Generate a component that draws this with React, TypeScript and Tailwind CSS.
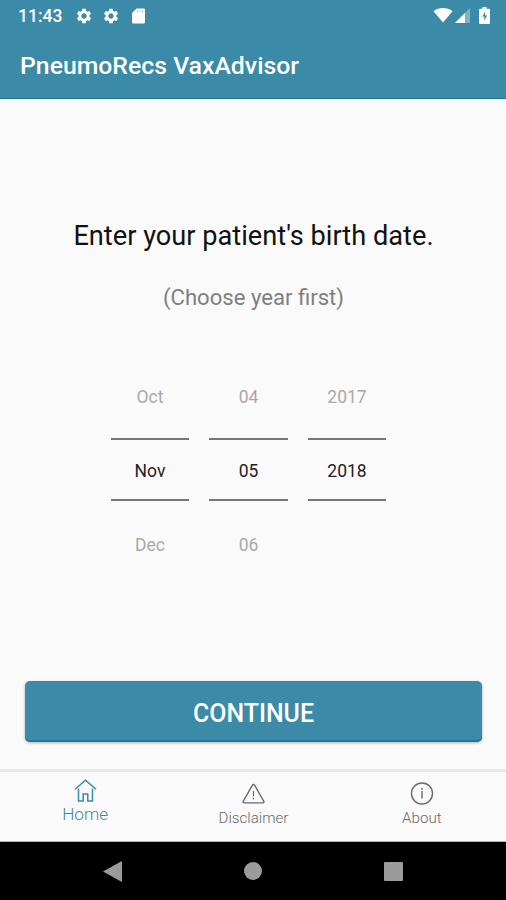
import React, { useState } from 'react';
import { MdSettings } from 'react-icons/md';

const StatusBar = () => (
  <div className="h-8 pl-[18px] pr-[16px] flex items-center justify-between">
    <div className="flex items-center">
      <span className="w-[57px] text-[17.5px] leading-8 font-medium">11:43</span>
      <MdSettings className="w-[18px] h-[18px] -mt-px" />
      <MdSettings className="w-[18px] h-[18px] -mt-px ml-[9px]" />
      <svg className="w-[13px] h-[16px] ml-[12px] -mt-px" viewBox="0 0 13 16">
        <path
          d="M4.5 0.5H11.8A1.2 1.2 0 0 1 13 1.7V14.3A1.2 1.2 0 0 1 11.8 15.5H1.2A1.2 1.2 0 0 1 0 14.3V5Z"
          fill="currentColor"
        />
        <path d="M5.5 2v2.5M8 2v2.5M10.5 2v2.5" stroke="#3a8aa8" strokeOpacity="0.4" />
      </svg>
    </div>
    <div className="flex items-center -mt-[2px]">
      <svg className="w-[20px] h-[16px]" viewBox="0 0 20 16" fill="currentColor">
        <path d="M0.5 4.2C6 -0.2 14 -0.2 19.5 4.2L10 15.5Z" />
      </svg>
      <svg className="w-[15px] h-[15px] ml-[2px]" viewBox="0 0 15 15" fill="currentColor">
        <path d="M0 15L15 0V15Z" opacity="0.35" />
        <path d="M0 15L10 5V15Z" />
      </svg>
      <svg className="w-[11px] h-[17px] ml-[9px]" viewBox="0 0 11 17">
        <path
          d="M3.5 0h4v1.8h2.3a1.2 1.2 0 0 1 1.2 1.2v12.8a1.2 1.2 0 0 1-1.2 1.2H1.2A1.2 1.2 0 0 1 0 15.8V3a1.2 1.2 0 0 1 1.2-1.2h2.3z"
          fill="currentColor"
        />
        <path d="M6.2 4.5L3.3 9.6h2v4L8.2 8.5h-2z" fill="#3a8aa8" />
      </svg>
    </div>
  </div>
);

const columns = [
  { id: 'month', values: ['Oct', 'Nov', 'Dec'] },
  { id: 'day', values: ['04', '05', '06'] },
  { id: 'year', values: ['2017', '2018', ''] },
];

const DatePicker = () => (
  <div className="flex justify-center gap-5 mr-[9px] text-[17.5px] text-[#a9a9a9]">
    {columns.map(({ id, values }) => (
      <div key={id} className="w-[78.5px] text-center">
        <div className="h-[63px] leading-[44px]">{values[0]}</div>
        <div className="h-[63px] leading-[62px] border-y-2 border-[#777777] text-[#222222]">
          {values[1]}
        </div>
        <div className="h-[66px] pt-[23px] leading-[42px]">{values[2]}</div>
      </div>
    ))}
  </div>
);

const HomeIcon = () => (
  <svg className="w-6 h-6" viewBox="0 0 24 24" fill="none" stroke="currentColor" strokeWidth="1.5">
    <path d="M2 11.3L12.5 2.2L23 11.3" />
    <path d="M5.5 10.5V23H10.2V16H14.8V23H19.5V10.5" />
  </svg>
);

const WarningIcon = () => (
  <svg className="w-6 h-6" viewBox="0 0 24 24" fill="none" stroke="currentColor" strokeWidth="1.4">
    <path d="M11.6 2.9a1 1 0 0 1 1.8 0L22.8 19.4a1 1 0 0 1-.9 1.5H3.1a1 1 0 0 1-.9-1.5z" />
    <path d="M12.5 9v5.2M12.5 15.7v1.7" strokeWidth="1.1" />
  </svg>
);

const InfoIcon = () => (
  <svg className="w-6 h-6" viewBox="0 0 24 24" fill="none" stroke="currentColor" strokeWidth="1.4">
    <circle cx="12" cy="11.5" r="10.5" />
    <path d="M12 6v1.7M12 9v7.5" />
  </svg>
);

const tabs = [
  { name: 'Home', Icon: HomeIcon },
  { name: 'Disclaimer', Icon: WarningIcon },
  { name: 'About', Icon: InfoIcon },
];

const App = () => {
  const [active, setActive] = useState('Home');

  return (
    <div className="w-full h-screen flex flex-col bg-[#fafafa] font-['Roboto',sans-serif]">
      <header className="h-[99px] shrink-0 bg-[#3a8aa8] border-b border-[#21778f] text-white">
        <StatusBar />
        <h1 className="pl-5 text-[24.8px] leading-[68px] font-medium">PneumoRecs VaxAdvisor</h1>
      </header>
      <main className="flex-1 flex flex-col">
        <h2 className="mt-[117px] pl-px text-center text-[27.2px] leading-10 text-[#111111]">
          Enter your patient's birth date.
        </h2>
        <p className="mt-[25px] mb-[62px] pl-px text-center text-[22.1px] leading-8 text-[#808080]">
          (Choose year first)
        </p>
        <DatePicker />
        <button className="mt-auto mb-[27px] ml-[25px] mr-6 h-[61px] pt-[4px] shrink-0 rounded-[5px] bg-[#3a8aa8] shadow-[inset_0_-2px_0_#167f99,0_1px_3px_rgba(0,0,0,0.3)] text-white text-[24.9px] font-medium">
          CONTINUE
        </button>
      </main>
      <nav className="h-[73px] shrink-0 flex border-t-[3px] border-t-[#e6e6e6] border-b border-b-[#b5b5b5]">
        {tabs.map(({ name, Icon }) => (
          <button
            key={name}
            onClick={() => setActive(name)}
            className={
              active === name
                ? 'flex-1 flex flex-col items-center pt-[6px] pl-px text-[17.2px] leading-6 text-[#3a8aa8]'
                : 'flex-1 flex flex-col items-center pt-[10px] text-[15.1px] leading-6 text-[#6a6a6a]'
            }
          >
            <Icon />
            <span className="font-light">{name}</span>
          </button>
        ))}
      </nav>
      <footer className="h-[58px] shrink-0 flex items-center justify-between px-[103px] bg-black text-[#9b9b9b]">
        <svg className="w-[19px] h-[21px]" viewBox="0 0 19 21" fill="currentColor">
          <path d="M0 10.5L18 0.5Q19 0 19 1V20Q19 21 18 20.5Z" />
        </svg>
        <div className="w-[18px] h-[18px] rounded-full bg-[#9b9b9b]" />
        <div className="w-[19px] h-[19px] rounded-[1px] bg-[#9b9b9b]" />
      </footer>
    </div>
  );
};

export default App;
